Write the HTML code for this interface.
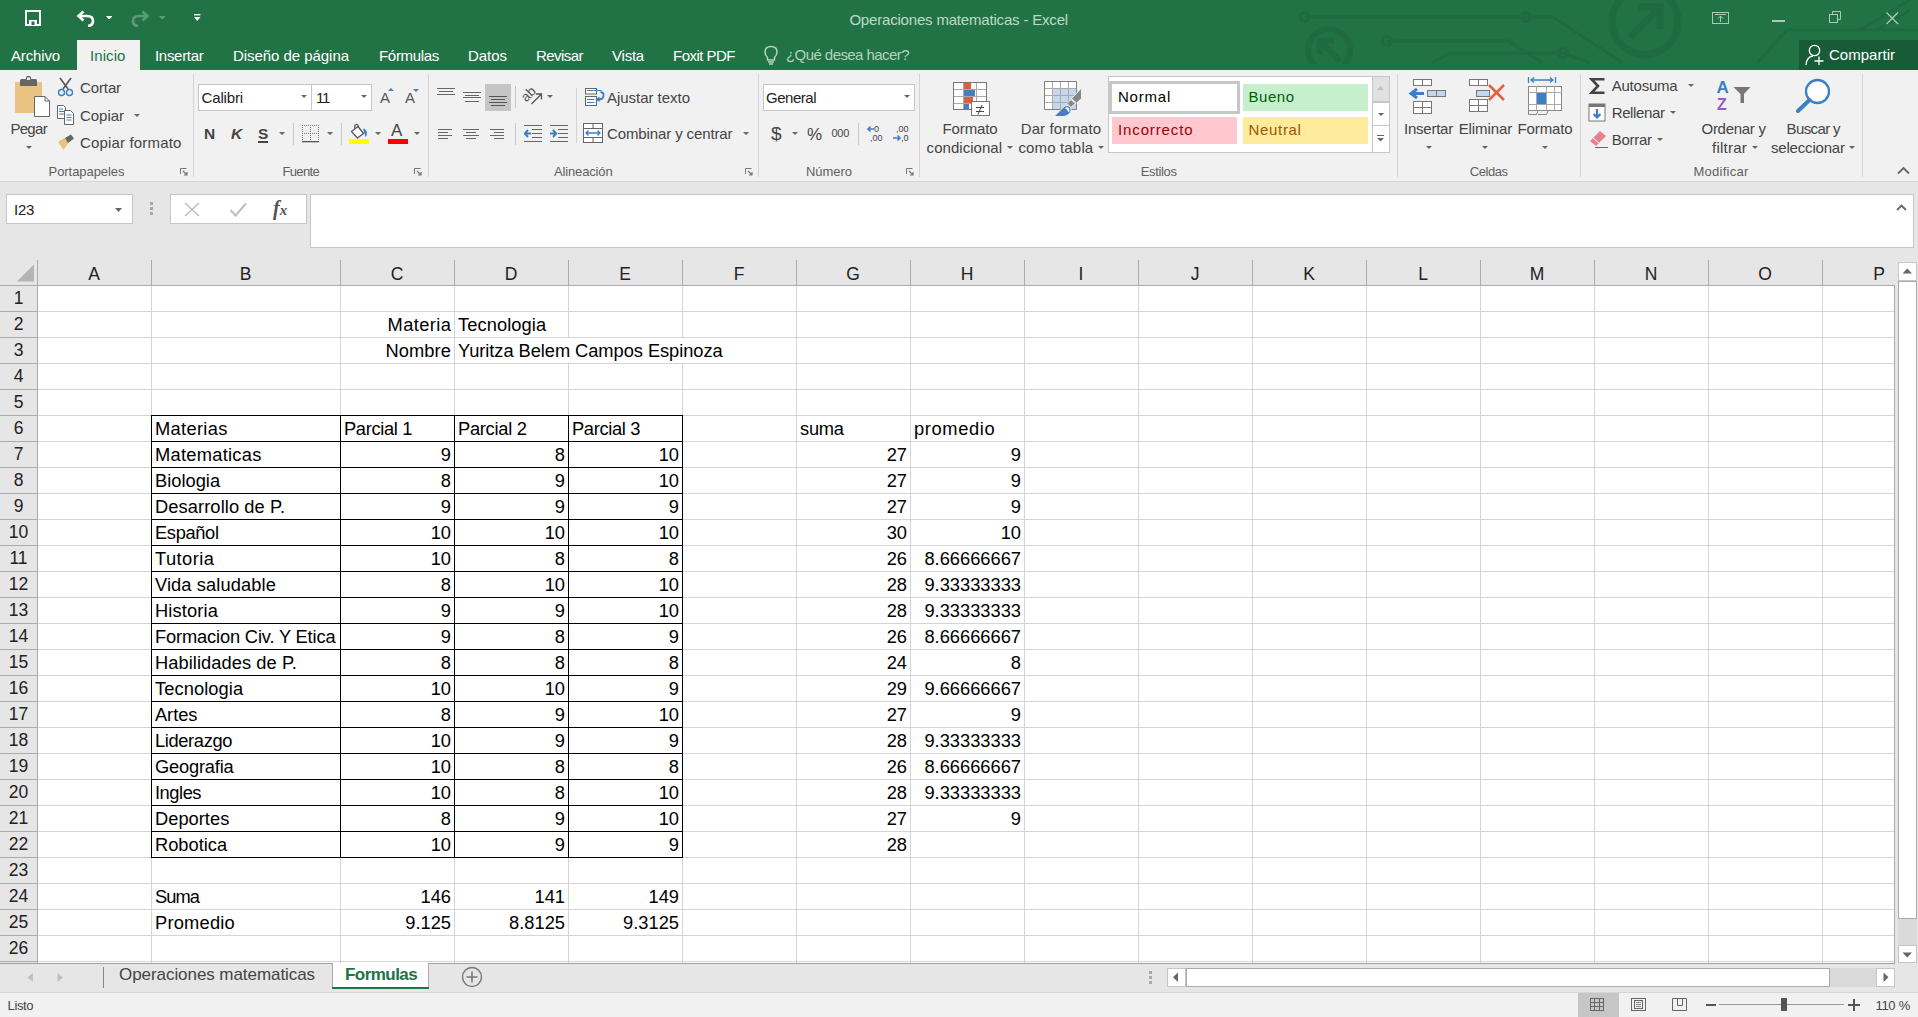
<!DOCTYPE html>
<html><head><meta charset="utf-8">
<style>
*{margin:0;padding:0;box-sizing:border-box}
html,body{width:1918px;height:1017px;overflow:hidden;background:#fff;font-family:"Liberation Sans",sans-serif;position:relative}
.a{position:absolute;white-space:nowrap}
#top{position:absolute;left:0;top:0;width:1918px;height:70px;background:#217346;overflow:hidden}
#ribbon{position:absolute;left:0;top:70px;width:1918px;height:112px;background:#f1f1f1;border-bottom:1px solid #d5d5d5}
#fbar{position:absolute;left:0;top:182px;width:1918px;height:78px;background:#e6e6e6}
#hdr{position:absolute;left:0;top:260px;width:1895px;height:25px;background:#e6e6e6}
#rowhdr{position:absolute;left:0;top:285px;width:37px;height:678px;background:#e6e6e6}
#tabs{position:absolute;left:0;top:963px;width:1918px;height:29px;background:#e6e6e6}
#status{position:absolute;left:0;top:992px;width:1918px;height:25px;background:#f1f1f1;border-top:1px solid #d5d5d5}
#vsb{position:absolute;left:1895px;top:260px;width:23px;height:703px;background:#e6e6e6}
.tab{position:absolute;top:44px;font-size:15px;color:#fff}
.cell{position:absolute;font-size:18.3px;color:#000;height:26px;line-height:27px;white-space:nowrap}
.rh{position:absolute;left:0;width:37px;text-align:center;font-size:17.5px;color:#222;height:26px;line-height:27px}
.ch{position:absolute;top:261px;text-align:center;font-size:17.5px;color:#222;height:25px;line-height:27px}
.vl{position:absolute;top:285px;width:1px;height:678px;background:#d4d4d4}
.hl{position:absolute;left:37px;width:1858px;height:1px;background:#d4d4d4}
.bl{position:absolute;background:#000}
.hv{position:absolute;top:260px;width:1px;height:25px;background:#ababab}
.rhl{position:absolute;left:0;width:37px;height:1px;background:#ababab}
.rl{font-size:15px;color:#262626}
.gl{position:absolute;font-size:13.5px;color:#666}
</style></head><body>
<div id="top"></div>
<div id="ribbon"></div>
<div id="fbar"></div>
<div class="a" style="left:193px;top:74px;width:1px;height:103px;background:#d4d4d4;"></div>
<div class="a" style="left:428px;top:74px;width:1px;height:103px;background:#d4d4d4;"></div>
<div class="a" style="left:758px;top:74px;width:1px;height:103px;background:#d4d4d4;"></div>
<div class="a" style="left:919px;top:74px;width:1px;height:103px;background:#d4d4d4;"></div>
<div class="a" style="left:1397px;top:74px;width:1px;height:103px;background:#d4d4d4;"></div>
<div class="a" style="left:1580px;top:74px;width:1px;height:103px;background:#d4d4d4;"></div>
<div class="a" style="left:1862px;top:74px;width:1px;height:103px;background:#d4d4d4;"></div>
<div class="a" style="left:48.6px;top:164.90px;font-size:13px;line-height:1;color:#5f5f5f;letter-spacing:-0.070px;">Portapapeles</div>
<div class="a" style="left:282.5px;top:164.90px;font-size:13px;line-height:1;color:#5f5f5f;letter-spacing:-0.664px;">Fuente</div>
<div class="a" style="left:554px;top:164.90px;font-size:13px;line-height:1;color:#5f5f5f;letter-spacing:-0.152px;">Alineación</div>
<div class="a" style="left:806px;top:164.90px;font-size:13px;line-height:1;color:#5f5f5f;letter-spacing:-0.042px;">Número</div>
<div class="a" style="left:1140.7px;top:164.90px;font-size:13px;line-height:1;color:#5f5f5f;letter-spacing:-0.328px;">Estilos</div>
<div class="a" style="left:1469.7px;top:164.90px;font-size:13px;line-height:1;color:#5f5f5f;letter-spacing:-0.414px;">Celdas</div>
<div class="a" style="left:1693.5px;top:164.90px;font-size:13px;line-height:1;color:#5f5f5f;letter-spacing:0.250px;">Modificar</div>
<svg class="a" style="left:180px;top:168px;" width="8" height="8" viewBox="0 0 8 8"><path d="M0.5 6V0.5H6.5" fill="none" stroke="#777" stroke-width="1"/><path d="M3 3L7 7M4 7H7V4" fill="none" stroke="#777" stroke-width="1.2"/></svg>
<svg class="a" style="left:414px;top:168px;" width="8" height="8" viewBox="0 0 8 8"><path d="M0.5 6V0.5H6.5" fill="none" stroke="#777" stroke-width="1"/><path d="M3 3L7 7M4 7H7V4" fill="none" stroke="#777" stroke-width="1.2"/></svg>
<svg class="a" style="left:745px;top:168px;" width="8" height="8" viewBox="0 0 8 8"><path d="M0.5 6V0.5H6.5" fill="none" stroke="#777" stroke-width="1"/><path d="M3 3L7 7M4 7H7V4" fill="none" stroke="#777" stroke-width="1.2"/></svg>
<svg class="a" style="left:906px;top:168px;" width="8" height="8" viewBox="0 0 8 8"><path d="M0.5 6V0.5H6.5" fill="none" stroke="#777" stroke-width="1"/><path d="M3 3L7 7M4 7H7V4" fill="none" stroke="#777" stroke-width="1.2"/></svg>
<svg class="a" style="left:14px;top:76px;" width="38" height="42" viewBox="0 0 38 42"><rect x="1" y="6" width="27" height="31" rx="1" fill="#eac282"/>
<path d="M6 10V4.5Q6 3 7.5 3H12V1.5Q12 0 13.5 0H15.5Q17 0 17 1.5V3H21.5Q23 3 23 4.5V10Z" fill="#666"/>
<rect x="13" y="1.5" width="3" height="2.5" fill="#eee"/>
<path d="M20.5 20.5H31L35.5 25V40.5H20.5Z" fill="#fff" stroke="#666" stroke-width="1"/>
<path d="M31 20.5V25H35.5" fill="none" stroke="#666" stroke-width="1"/></svg>
<div class="a" style="left:10.4px;top:120.60px;font-size:15px;line-height:1;color:#444;letter-spacing:-0.686px;">Pegar</div>
<svg class="a" style="left:26px;top:146px;" width="6" height="3" viewBox="0 0 6 3"><path d="M0 0H6L3.0 3Z" fill="#666"/></svg>
<svg class="a" style="left:57px;top:77px;" width="18" height="20" viewBox="0 0 18 20"><path d="M3 1L11 12M14 1L6 12" stroke="#555" stroke-width="1.6" fill="none"/>
<circle cx="4.5" cy="15.5" r="3" fill="none" stroke="#3c7fc4" stroke-width="1.4"/>
<circle cx="12.5" cy="15.5" r="3" fill="none" stroke="#3c7fc4" stroke-width="1.4"/></svg>
<div class="a" style="left:80px;top:79.80px;font-size:15px;line-height:1;color:#444;letter-spacing:-0.115px;">Cortar</div>
<svg class="a" style="left:57px;top:105px;" width="19" height="20" viewBox="0 0 19 20"><path d="M0.5 0.5H6.5L8.5 2.5V13.5H0.5Z" fill="#fff" stroke="#666"/>
<path d="M2 4H6M2 6.5H7M2 9H7" stroke="#3c7fc4"/>
<path d="M7.5 5.5H13.5L16.5 8.5V19.5H7.5Z" fill="#fff" stroke="#666"/>
<path d="M9.5 10H14.5M9.5 12.5H14.5M9.5 15H14.5" stroke="#3c7fc4"/></svg>
<div class="a" style="left:80px;top:107.60px;font-size:15px;line-height:1;color:#444;letter-spacing:-0.031px;">Copiar</div>
<svg class="a" style="left:134px;top:113.5px;" width="6" height="3" viewBox="0 0 6 3"><path d="M0 0H6L3.0 3Z" fill="#666"/></svg>
<svg class="a" style="left:57px;top:134px;" width="19" height="17" viewBox="0 0 19 17"><path d="M1 8L8 3.5L11.5 9L6.5 16Z" fill="#eac282"/>
<path d="M8 4L14 0.5L17 4.5L11 9Z" fill="#666"/></svg>
<div class="a" style="left:80px;top:135.20px;font-size:15px;line-height:1;color:#444;letter-spacing:0.162px;">Copiar formato</div>
<div class="a" style="left:198px;top:84px;width:114px;height:27px;background:#fff;border:1px solid #c6c6c6;"></div>
<div class="a" style="left:311px;top:84px;width:61px;height:27px;background:#fff;border:1px solid #c6c6c6;"></div>
<div class="a" style="left:201.5px;top:89.60px;font-size:15px;line-height:1;color:#222;letter-spacing:-0.143px;">Calibri</div>
<svg class="a" style="left:301px;top:95px;" width="6" height="3" viewBox="0 0 6 3"><path d="M0 0H6L3.0 3Z" fill="#666"/></svg>
<div class="a" style="left:316px;top:89.60px;font-size:15px;line-height:1;color:#222;letter-spacing:-1.289px;">11</div>
<svg class="a" style="left:361px;top:95px;" width="6" height="3" viewBox="0 0 6 3"><path d="M0 0H6L3.0 3Z" fill="#666"/></svg>
<div class="a" style="left:380px;top:89.60px;font-size:15px;line-height:1;color:#555;">A</div>
<svg class="a" style="left:388px;top:88px;" width="7" height="3" viewBox="0 0 7 3"><path d="M0 3H6L3 0Z" fill="#3c7fc4"/></svg>
<div class="a" style="left:405px;top:89.60px;font-size:15px;line-height:1;color:#555;">A</div>
<svg class="a" style="left:413px;top:89px;" width="7" height="3" viewBox="0 0 7 3"><path d="M0 0H6L3 3Z" fill="#3c7fc4"/></svg>
<div class="a" style="left:204px;top:125.58px;font-size:15.5px;line-height:1;color:#444;font-weight:bold;">N</div>
<div class="a" style="left:231px;top:125.58px;font-size:15.5px;line-height:1;color:#444;font-weight:bold;font-style:italic;">K</div>
<div class="a" style="left:258px;top:125.58px;font-size:15.5px;line-height:1;color:#444;font-weight:bold;">S</div>
<div class="a" style="left:258px;top:141px;width:10px;height:2px;background:#444;"></div>
<svg class="a" style="left:279px;top:132px;" width="6" height="3" viewBox="0 0 6 3"><path d="M0 0H6L3.0 3Z" fill="#666"/></svg>
<div class="a" style="left:293px;top:123px;width:1px;height:22px;background:#c8c8c8;"></div>
<svg class="a" style="left:301px;top:124px;" width="19" height="19" viewBox="0 0 19 19"><rect x="1" y="1" width="1" height="1" fill="#777"/><rect x="1" y="9" width="1" height="1" fill="#777"/><rect x="1" y="1" width="1" height="1" fill="#777"/><rect x="9" y="1" width="1" height="1" fill="#777"/><rect x="17" y="1" width="1" height="1" fill="#777"/><rect x="3" y="1" width="1" height="1" fill="#777"/><rect x="3" y="9" width="1" height="1" fill="#777"/><rect x="1" y="3" width="1" height="1" fill="#777"/><rect x="9" y="3" width="1" height="1" fill="#777"/><rect x="17" y="3" width="1" height="1" fill="#777"/><rect x="5" y="1" width="1" height="1" fill="#777"/><rect x="5" y="9" width="1" height="1" fill="#777"/><rect x="1" y="5" width="1" height="1" fill="#777"/><rect x="9" y="5" width="1" height="1" fill="#777"/><rect x="17" y="5" width="1" height="1" fill="#777"/><rect x="7" y="1" width="1" height="1" fill="#777"/><rect x="7" y="9" width="1" height="1" fill="#777"/><rect x="1" y="7" width="1" height="1" fill="#777"/><rect x="9" y="7" width="1" height="1" fill="#777"/><rect x="17" y="7" width="1" height="1" fill="#777"/><rect x="9" y="1" width="1" height="1" fill="#777"/><rect x="9" y="9" width="1" height="1" fill="#777"/><rect x="1" y="9" width="1" height="1" fill="#777"/><rect x="9" y="9" width="1" height="1" fill="#777"/><rect x="17" y="9" width="1" height="1" fill="#777"/><rect x="11" y="1" width="1" height="1" fill="#777"/><rect x="11" y="9" width="1" height="1" fill="#777"/><rect x="1" y="11" width="1" height="1" fill="#777"/><rect x="9" y="11" width="1" height="1" fill="#777"/><rect x="17" y="11" width="1" height="1" fill="#777"/><rect x="13" y="1" width="1" height="1" fill="#777"/><rect x="13" y="9" width="1" height="1" fill="#777"/><rect x="1" y="13" width="1" height="1" fill="#777"/><rect x="9" y="13" width="1" height="1" fill="#777"/><rect x="17" y="13" width="1" height="1" fill="#777"/><rect x="15" y="1" width="1" height="1" fill="#777"/><rect x="15" y="9" width="1" height="1" fill="#777"/><rect x="1" y="15" width="1" height="1" fill="#777"/><rect x="9" y="15" width="1" height="1" fill="#777"/><rect x="17" y="15" width="1" height="1" fill="#777"/><rect x="17" y="1" width="1" height="1" fill="#777"/><rect x="17" y="9" width="1" height="1" fill="#777"/><rect x="1" y="17" width="1" height="1" fill="#777"/><rect x="9" y="17" width="1" height="1" fill="#777"/><rect x="17" y="17" width="1" height="1" fill="#777"/><rect x="1" y="17" width="17" height="1.3" fill="#555"/></svg>
<svg class="a" style="left:327px;top:132px;" width="6" height="3" viewBox="0 0 6 3"><path d="M0 0H6L3.0 3Z" fill="#666"/></svg>
<div class="a" style="left:341px;top:123px;width:1px;height:22px;background:#c8c8c8;"></div>
<svg class="a" style="left:348px;top:123px;" width="22" height="22" viewBox="0 0 22 22"><path d="M3.5 8.5L10 3.5L15.5 10.5L9.5 15Z" fill="#fff" stroke="#555" stroke-width="1.3" stroke-linejoin="round"/>
<path d="M7 6Q6 2.5 8 1.5Q10 1 10.5 4" fill="none" stroke="#555" stroke-width="1.2"/>
<path d="M15 5.5Q18.5 6 19 10Q19 12.5 17.5 14L16.5 10.5Z" fill="#3c7fc4"/>
<rect x="1" y="16" width="20" height="5" fill="#ffff00"/></svg>
<svg class="a" style="left:375px;top:132px;" width="6" height="3" viewBox="0 0 6 3"><path d="M0 0H6L3.0 3Z" fill="#666"/></svg>
<div class="a" style="left:391px;top:122.41px;font-size:17px;line-height:1;color:#444;">A</div>
<div class="a" style="left:388px;top:139px;width:20px;height:5px;background:#ff0000;"></div>
<svg class="a" style="left:414px;top:132px;" width="6" height="3" viewBox="0 0 6 3"><path d="M0 0H6L3.0 3Z" fill="#666"/></svg>
<svg class="a" style="left:437px;top:85px;" width="20" height="12" viewBox="0 0 20 12"><path d="M0 3.5H18" stroke="#666" stroke-width="1"/><path d="M2 6.5H16" stroke="#666" stroke-width="1"/><path d="M0 9.5H18" stroke="#666" stroke-width="1"/></svg>
<svg class="a" style="left:463px;top:88px;" width="20" height="16" viewBox="0 0 20 16"><path d="M0 4.5H18" stroke="#666" stroke-width="1"/><path d="M2 7.5H16" stroke="#666" stroke-width="1"/><path d="M0 9.5H18" stroke="#666" stroke-width="1"/><path d="M2 13.5H16" stroke="#666" stroke-width="1"/></svg>
<div class="a" style="left:485px;top:84px;width:26px;height:27px;background:#c5c5c5;"></div>
<svg class="a" style="left:489px;top:95px;" width="20" height="14" viewBox="0 0 20 14"><path d="M0 1.5H18" stroke="#555" stroke-width="1"/><path d="M2 4.5H16" stroke="#555" stroke-width="1"/><path d="M0 7.5H18" stroke="#555" stroke-width="1"/><path d="M2 10.5H16" stroke="#555" stroke-width="1"/></svg>
<div class="a" style="left:515px;top:86px;width:1px;height:22px;background:#c8c8c8;"></div>
<svg class="a" style="left:520px;top:85px;" width="24" height="22" viewBox="0 0 24 22"><text x="1" y="13" font-family="Liberation Sans" font-size="13.5" fill="#555" transform="rotate(-45 9 9)">ab</text>
<path d="M11.5 19L21 9.5M16 9H21.5V14.5" stroke="#555" stroke-width="1.3" fill="none"/></svg>
<svg class="a" style="left:547px;top:95px;" width="6" height="3" viewBox="0 0 6 3"><path d="M0 0H6L3.0 3Z" fill="#666"/></svg>
<div class="a" style="left:576px;top:88px;width:1px;height:55px;background:#d4d4d4;"></div>
<svg class="a" style="left:584px;top:87px;" width="22" height="20" viewBox="0 0 22 20"><rect x="1.5" y="1.5" width="11" height="5.5" fill="#fff" stroke="#666"/>
<rect x="1.5" y="9.5" width="11" height="9" fill="#fff" stroke="#666"/>
<path d="M3 3.5H17.5M3 12.5H10.5M3 15.5H10.5" stroke="#3c7fc4" stroke-width="1.1"/>
<path d="M16.5 5Q20 5.5 19.5 9Q19 12.5 14.5 12.5" stroke="#3c7fc4" stroke-width="1.8" fill="none"/>
<path d="M15.5 9.5L11.5 12.5L15.5 15Z" fill="#3c7fc4"/></svg>
<div class="a" style="left:607px;top:89.60px;font-size:15px;line-height:1;color:#444;letter-spacing:-0.030px;">Ajustar texto</div>
<svg class="a" style="left:438px;top:128px;" width="18" height="12" viewBox="0 0 18 12"><path d="M0 1.5H14" stroke="#666" stroke-width="1"/><path d="M0 4.5H10" stroke="#666" stroke-width="1"/><path d="M0 7.5H14" stroke="#666" stroke-width="1"/><path d="M0 10.5H10" stroke="#666" stroke-width="1"/></svg>
<svg class="a" style="left:463px;top:128px;" width="18" height="12" viewBox="0 0 18 12"><path d="M0 1.5H16" stroke="#666" stroke-width="1"/><path d="M3 4.5H13" stroke="#666" stroke-width="1"/><path d="M0 7.5H16" stroke="#666" stroke-width="1"/><path d="M3 10.5H13" stroke="#666" stroke-width="1"/></svg>
<svg class="a" style="left:490px;top:128px;" width="18" height="12" viewBox="0 0 18 12"><path d="M0 1.5H14" stroke="#666" stroke-width="1"/><path d="M4 4.5H14" stroke="#666" stroke-width="1"/><path d="M0 7.5H14" stroke="#666" stroke-width="1"/><path d="M4 10.5H14" stroke="#666" stroke-width="1"/></svg>
<div class="a" style="left:515px;top:123px;width:1px;height:22px;background:#c8c8c8;"></div>
<svg class="a" style="left:524px;top:125px;" width="19" height="18" viewBox="0 0 19 18"><path d="M0 0.5H18M8 4.5H18M8 8.5H18M8 12.5H18M0 16.5H18" stroke="#666"/>
<path d="M7 8.5H1M4 5L0.8 8.5L4 12" stroke="#3c7fc4" stroke-width="2" fill="none"/></svg>
<svg class="a" style="left:550px;top:125px;" width="19" height="18" viewBox="0 0 19 18"><path d="M0 0.5H18M8 4.5H18M8 8.5H18M8 12.5H18M0 16.5H18" stroke="#666"/>
<path d="M0 8.5H6M3 5L6.2 8.5L3 12" stroke="#3c7fc4" stroke-width="2" fill="none"/></svg>
<svg class="a" style="left:583px;top:123px;" width="21" height="21" viewBox="0 0 21 21"><rect x="0.5" y="0.5" width="19" height="19" fill="#fff" stroke="#666"/>
<path d="M0.5 5.5H19.5M0.5 14.5H19.5M10 0.5V5.5M10 14.5V19.5" stroke="#666"/>
<path d="M3 10H17M5.5 7.5L3 10L5.5 12.5M14.5 7.5L17 10L14.5 12.5" stroke="#3c7fc4" stroke-width="1.3" fill="none"/></svg>
<div class="a" style="left:607px;top:125.60px;font-size:15px;line-height:1;color:#444;letter-spacing:-0.115px;">Combinar y centrar</div>
<svg class="a" style="left:743px;top:132px;" width="6" height="3" viewBox="0 0 6 3"><path d="M0 0H6L3.0 3Z" fill="#666"/></svg>
<div class="a" style="left:763px;top:84px;width:152px;height:27px;background:#fff;border:1px solid #c6c6c6;"></div>
<div class="a" style="left:766px;top:89.60px;font-size:15px;line-height:1;color:#222;letter-spacing:-0.482px;">General</div>
<svg class="a" style="left:904px;top:95px;" width="6" height="3" viewBox="0 0 6 3"><path d="M0 0H6L3.0 3Z" fill="#666"/></svg>
<div class="a" style="left:771px;top:124.22px;font-size:19px;line-height:1;color:#444;">$</div>
<svg class="a" style="left:792px;top:132px;" width="6" height="3" viewBox="0 0 6 3"><path d="M0 0H6L3.0 3Z" fill="#666"/></svg>
<div class="a" style="left:807px;top:125.91px;font-size:17px;line-height:1;color:#444;">%</div>
<div class="a" style="left:831.5px;top:127.99px;font-size:11px;line-height:1;color:#444;letter-spacing:-0.292px;">000</div>
<div class="a" style="left:858px;top:123px;width:1px;height:22px;background:#c8c8c8;"></div>
<svg class="a" style="left:866px;top:124px;" width="20" height="20" viewBox="0 0 20 20"><text x="8" y="8" font-family="Liberation Sans" font-size="9" fill="#444">0</text>
<text x="4" y="17" font-family="Liberation Sans" font-size="9" fill="#444">,00</text>
<path d="M8 5H2M4.5 2.5L2 5L4.5 7.5" stroke="#3c7fc4" stroke-width="1.6" fill="none"/></svg>
<svg class="a" style="left:892px;top:124px;" width="20" height="20" viewBox="0 0 20 20"><text x="4" y="8" font-family="Liberation Sans" font-size="9" fill="#444">,00</text>
<text x="9" y="17" font-family="Liberation Sans" font-size="9" fill="#444">,0</text>
<path d="M1 14H8M5.5 11.5L8 14L5.5 16.5" stroke="#3c7fc4" stroke-width="1.6" fill="none"/></svg>
<svg class="a" style="left:952px;top:81px;" width="40" height="36" viewBox="0 0 40 36"><rect x="1.5" y="1.5" width="33" height="27" fill="#fff"/>
<rect x="12" y="2" width="7" height="6" fill="#dd5e3b"/>
<rect x="12" y="9" width="11" height="6" fill="#4a7fbf"/>
<rect x="12" y="16" width="9" height="6" fill="#dd5e3b"/>
<rect x="12" y="23" width="5" height="5" fill="#4a7fbf"/>
<path d="M1.5 8.5H34.5M1.5 15.5H34.5M1.5 22.5H34.5M11.5 1.5V28.5M24.5 1.5V28.5" stroke="#aaa" fill="none"/>
<rect x="1.5" y="1.5" width="33" height="27" fill="none" stroke="#777"/>
<rect x="19.5" y="20.5" width="18" height="14" fill="#fff" stroke="#777"/>
<path d="M24 26.5H32M24 30.5H32M30 24L26 33.5" stroke="#444" stroke-width="1" fill="none"/></svg>
<div class="a" style="left:942.5px;top:120.60px;font-size:15px;line-height:1;color:#444;letter-spacing:-0.123px;">Formato</div>
<div class="a" style="left:926.6px;top:140.30px;font-size:15px;line-height:1;color:#444;letter-spacing:0.041px;">condicional</div>
<svg class="a" style="left:1007px;top:146px;" width="6" height="3" viewBox="0 0 6 3"><path d="M0 0H6L3.0 3Z" fill="#666"/></svg>
<svg class="a" style="left:1043px;top:80px;" width="40" height="37" viewBox="0 0 40 37"><rect x="1.5" y="1.5" width="32" height="28" fill="#fff"/>
<rect x="9.5" y="8.5" width="24" height="21" fill="#c5d7ec"/>
<path d="M1.5 8.5H33.5M1.5 15.5H33.5M1.5 22.5H33.5M9.5 1.5V29.5M17.5 1.5V29.5M25.5 1.5V29.5" stroke="#aaa" fill="none"/>
<path d="M1.5 1.5H33.5V29.5H1.5Z" stroke="#808080" fill="none"/>
<path d="M38.5 8V18.5L33.5 23L28.5 18.5Z" fill="#868686" stroke="#f1f1f1" stroke-width="1"/>
<path d="M28 19.5L32 23.5L28 27.5L24 23.5Z" fill="#868686" stroke="#f1f1f1" stroke-width="1"/>
<path d="M11 36.5L20 27.5Q22.5 25 25 25.5Q28.5 26.5 28 30.5Q27 35 21 36.5Z" fill="#4a7fbf" stroke="#f1f1f1" stroke-width="1"/>
<path d="M22 28Q24.5 26.5 26 28.5Q27 31 25.5 32.5Q25 29.5 22 28Z" fill="#fff"/></svg>
<div class="a" style="left:1020.7px;top:120.60px;font-size:15px;line-height:1;color:#444;letter-spacing:0.126px;">Dar formato</div>
<div class="a" style="left:1018.4px;top:140.30px;font-size:15px;line-height:1;color:#444;letter-spacing:0.161px;">como tabla</div>
<svg class="a" style="left:1098px;top:146px;" width="6" height="3" viewBox="0 0 6 3"><path d="M0 0H6L3.0 3Z" fill="#666"/></svg>
<div class="a" style="left:1108px;top:76px;width:282px;height:77px;background:#fff;border:1px solid #c6c6c6;"></div>
<div class="a" style="left:1109px;top:81px;width:131px;height:33px;background:#fff;border:3px solid #c6c6c6;"></div>
<div class="a" style="left:1118px;top:89.40px;font-size:15px;line-height:1;color:#000;letter-spacing:0.776px;">Normal</div>
<div class="a" style="left:1243px;top:84px;width:125px;height:27px;background:#c6efce;"></div>
<div class="a" style="left:1248.6px;top:89.40px;font-size:15px;line-height:1;color:#006100;letter-spacing:0.525px;">Bueno</div>
<div class="a" style="left:1112px;top:117px;width:125px;height:27px;background:#ffc7ce;"></div>
<div class="a" style="left:1118px;top:122.30px;font-size:15px;line-height:1;color:#9c0006;letter-spacing:0.878px;">Incorrecto</div>
<div class="a" style="left:1243px;top:117px;width:125px;height:27px;background:#ffeb9c;"></div>
<div class="a" style="left:1248.6px;top:122.30px;font-size:15px;line-height:1;color:#9c5700;letter-spacing:0.663px;">Neutral</div>
<div class="a" style="left:1372px;top:76px;width:18px;height:26px;background:#e1e1e1;border:1px solid #c6c6c6;"></div>
<div class="a" style="left:1372px;top:102px;width:18px;height:24px;background:#fff;border:1px solid #c6c6c6;"></div>
<div class="a" style="left:1372px;top:125px;width:18px;height:28px;background:#fff;border:1px solid #c6c6c6;"></div>
<svg class="a" style="left:1377px;top:86px;" width="8" height="5" viewBox="0 0 8 5"><path d="M0 4H7L3.5 0Z" fill="#c0c0c0"/></svg>
<svg class="a" style="left:1378px;top:113px;" width="6" height="3" viewBox="0 0 6 3"><path d="M0 0H6L3.0 3Z" fill="#666"/></svg>
<svg class="a" style="left:1377px;top:135px;" width="8" height="8" viewBox="0 0 8 8"><path d="M0 0.5H7" stroke="#666"/><path d="M0 3H7L3.5 6.5Z" fill="#666"/></svg>
<svg class="a" style="left:1408px;top:78px;" width="40" height="37" viewBox="0 0 40 37"><rect x="5.5" y="1.5" width="18" height="6" fill="#fff" stroke="#777"/><path d="M14.5 1.5V7.5" stroke="#777"/>
<rect x="19.5" y="12.5" width="18" height="6" fill="#c5d7ec" stroke="#777"/><path d="M28.5 12.5V18.5" stroke="#777"/>
<path d="M16 15.5H5M9 11L3 15.5L9 20" stroke="#3c7fc4" stroke-width="3" fill="none"/>
<rect x="5.5" y="23.5" width="18" height="12" fill="#fff" stroke="#777"/><path d="M14.5 23.5V35.5M5.5 29.5H23.5" stroke="#777"/></svg>
<div class="a" style="left:1404px;top:120.60px;font-size:15px;line-height:1;color:#444;letter-spacing:-0.234px;">Insertar</div>
<svg class="a" style="left:1426px;top:146px;" width="6" height="3" viewBox="0 0 6 3"><path d="M0 0H6L3.0 3Z" fill="#666"/></svg>
<svg class="a" style="left:1468px;top:78px;" width="40" height="37" viewBox="0 0 40 37"><rect x="1.5" y="1.5" width="18" height="6" fill="#fff" stroke="#777"/><path d="M10.5 1.5V7.5" stroke="#777"/>
<rect x="8.5" y="12.5" width="13" height="6" fill="#c5d7ec" stroke="#777"/>
<rect x="1.5" y="21.5" width="18" height="12" fill="#fff" stroke="#777"/><path d="M10.5 21.5V33.5M1.5 27.5H19.5" stroke="#777"/>
<path d="M21 7L36 22M36 7L21 22" stroke="#e0623a" stroke-width="2.5" fill="none"/></svg>
<div class="a" style="left:1458.7px;top:120.60px;font-size:15px;line-height:1;color:#444;letter-spacing:-0.084px;">Eliminar</div>
<svg class="a" style="left:1482px;top:146px;" width="6" height="3" viewBox="0 0 6 3"><path d="M0 0H6L3.0 3Z" fill="#666"/></svg>
<svg class="a" style="left:1527px;top:77px;" width="38" height="39" viewBox="0 0 38 39"><path d="M1.5 0V6M28.5 0V6M4 3H26M7 0.5L4 3L7 5.5M23 0.5L26 3L23 5.5" stroke="#3c7fc4" stroke-width="1.3" fill="none"/>
<rect x="1.5" y="9.5" width="33" height="24" fill="#fff" stroke="#888"/>
<path d="M1.5 15.5H34.5M1.5 27.5H34.5M9.5 9.5V33.5M19.5 9.5V33.5M27.5 9.5V33.5" stroke="#aaa" fill="none"/>
<rect x="10" y="16" width="9" height="11" fill="#3c7fc4"/>
<path d="M1.5 33.5V37.5H9.5L11 33.5M11 37.5H19.5L21 33.5" stroke="#888" fill="none"/></svg>
<div class="a" style="left:1517.5px;top:120.60px;font-size:15px;line-height:1;color:#444;letter-spacing:-0.123px;">Formato</div>
<svg class="a" style="left:1542px;top:146px;" width="6" height="3" viewBox="0 0 6 3"><path d="M0 0H6L3.0 3Z" fill="#666"/></svg>
<svg class="a" style="left:1589px;top:77px;" width="18" height="18" viewBox="0 0 18 18"><path d="M15.5 2.2H2.5L9 9L2.5 15.8H15.5" fill="none" stroke="#444" stroke-width="2.6" stroke-linejoin="miter"/></svg>
<div class="a" style="left:1611.7px;top:78.10px;font-size:15px;line-height:1;color:#444;letter-spacing:-0.218px;">Autosuma</div>
<svg class="a" style="left:1688px;top:84px;" width="6" height="3" viewBox="0 0 6 3"><path d="M0 0H6L3.0 3Z" fill="#666"/></svg>
<svg class="a" style="left:1588px;top:103px;" width="19" height="20" viewBox="0 0 19 20"><rect x="1" y="1" width="16" height="17" fill="#fff" stroke="#777"/>
<rect x="1" y="1" width="16" height="3" fill="#777"/>
<path d="M9 6V14M5.5 11L9 14.5L12.5 11" stroke="#3c7fc4" stroke-width="2.2" fill="none"/></svg>
<div class="a" style="left:1611.7px;top:105.20px;font-size:15px;line-height:1;color:#444;letter-spacing:-0.382px;">Rellenar</div>
<svg class="a" style="left:1670px;top:111px;" width="6" height="3" viewBox="0 0 6 3"><path d="M0 0H6L3.0 3Z" fill="#666"/></svg>
<svg class="a" style="left:1589px;top:130px;" width="21" height="19" viewBox="0 0 21 19"><path d="M1 11L11 1L17 6L7 16Z" fill="#e8808f"/>
<path d="M4 8L10 13" stroke="#fff" stroke-width="1"/>
<path d="M6 17.5H19" stroke="#666" stroke-width="1"/></svg>
<div class="a" style="left:1611.7px;top:131.80px;font-size:15px;line-height:1;color:#444;letter-spacing:-0.281px;">Borrar</div>
<svg class="a" style="left:1657px;top:138px;" width="6" height="3" viewBox="0 0 6 3"><path d="M0 0H6L3.0 3Z" fill="#666"/></svg>
<div class="a" style="left:1716.5px;top:79.11px;font-size:17px;line-height:1;color:#3c7fc4;font-weight:bold;">A</div>
<div class="a" style="left:1717px;top:96.96px;font-size:16px;line-height:1;color:#9b59c6;font-weight:bold;">Z</div>
<svg class="a" style="left:1733px;top:86px;" width="19" height="19" viewBox="0 0 19 19"><path d="M0.5 1H17.5L11 8V17H7.5V8Z" fill="#777"/></svg>
<div class="a" style="left:1701.5px;top:120.60px;font-size:15px;line-height:1;color:#444;letter-spacing:-0.280px;">Ordenar y</div>
<div class="a" style="left:1712px;top:140.30px;font-size:15px;line-height:1;color:#444;letter-spacing:0.237px;">filtrar</div>
<svg class="a" style="left:1752px;top:146px;" width="6" height="3" viewBox="0 0 6 3"><path d="M0 0H6L3.0 3Z" fill="#666"/></svg>
<svg class="a" style="left:1794px;top:77px;" width="40" height="38" viewBox="0 0 40 38"><circle cx="23.5" cy="14.5" r="11.5" fill="#fff" stroke="#3c7fc4" stroke-width="2.3"/>
<path d="M15.5 23L4 34" stroke="#3c7fc4" stroke-width="4" stroke-linecap="round"/></svg>
<div class="a" style="left:1786.6px;top:120.60px;font-size:15px;line-height:1;color:#444;letter-spacing:-0.620px;">Buscar y</div>
<div class="a" style="left:1771px;top:140.30px;font-size:15px;line-height:1;color:#444;letter-spacing:-0.189px;">seleccionar</div>
<svg class="a" style="left:1849px;top:146px;" width="6" height="3" viewBox="0 0 6 3"><path d="M0 0H6L3.0 3Z" fill="#666"/></svg>
<svg class="a" style="left:1897px;top:166px;" width="13" height="9" viewBox="0 0 13 9"><path d="M1 7.5L6.5 2L12 7.5" stroke="#666" stroke-width="1.8" fill="none"/></svg>
<svg class="a" style="left:1280px;top:0px" width="638" height="64" viewBox="0 0 638 64">
<g stroke="#1f6a40" stroke-width="3" fill="none">
<path d="M25 17H246H273L343 63"/>
<circle cx="25" cy="17" r="4.5"/><circle cx="246" cy="17" r="4.5"/>
<path d="M107 41H228L263 63"/>
<circle cx="107" cy="41" r="4.5"/>
<path d="M152 63L170 53H283L310 63"/>
<circle cx="283" cy="53" r="4.5"/>
<circle cx="365" cy="21.7" r="33" stroke-width="7"/>
<path d="M350 37L380 7M358 7H380V29" stroke-width="7"/>
<circle cx="49" cy="50" r="21" stroke-width="6"/>
<path d="M60 61L40 41M40 55V41H54" stroke-width="6"/>
<path d="M477 63L507 30H638M580 30L633 -2M597 30L630 10"/>
</g></svg>
<div class="a" style="left:849.4px;top:11.60px;font-size:15px;line-height:1;color:#bfd9c6;letter-spacing:-0.184px;">Operaciones matematicas - Excel</div>
<svg class="a" style="left:24px;top:9px;" width="18" height="18" viewBox="0 0 18 18"><rect x="2" y="2" width="14" height="14" fill="none" stroke="#fff" stroke-width="2"/>
<rect x="5" y="11" width="8" height="6" fill="#fff"/><rect x="7.5" y="12.5" width="3" height="3.5" fill="#217346"/></svg>
<svg class="a" style="left:76px;top:10px;" width="21" height="17" viewBox="0 0 21 17"><path d="M3 6H11Q17 6 17 11Q17 15.5 12 16" fill="none" stroke="#fff" stroke-width="2.6"/>
<path d="M7.5 1.5L2.5 6L7.5 10.5" fill="none" stroke="#fff" stroke-width="2.6"/></svg>
<svg class="a" style="left:105.6px;top:15.6px;" width="6.5" height="3.8" viewBox="0 0 6.5 3.8"><path d="M0 0H6.5L3.25 3.8Z" fill="#fff"/></svg>
<svg class="a" style="left:130px;top:10px;" width="21" height="17" viewBox="0 0 21 17"><path d="M17 6H9Q3 6 3 11Q3 15.5 8 16" fill="none" stroke="#5e9b78" stroke-width="2.6"/>
<path d="M12.5 1.5L17.5 6L12.5 10.5" fill="none" stroke="#5e9b78" stroke-width="2.6"/></svg>
<svg class="a" style="left:159px;top:15.6px;" width="6.5" height="3.8" viewBox="0 0 6.5 3.8"><path d="M0 0H6.5L3.25 3.8Z" fill="#5e9b78"/></svg>
<svg class="a" style="left:194px;top:14px;" width="7" height="8" viewBox="0 0 7 8"><path d="M0 0.75H6.5" stroke="#fff" stroke-width="1.3"/><path d="M0 3H6.5L3.25 7Z" fill="#fff"/></svg>
<div class="a" style="left:77px;top:40px;width:63px;height:30px;background:#f1f1f1;"></div>
<div class="a" style="left:11px;top:47.60px;font-size:15px;line-height:1;color:#fff;letter-spacing:-0.145px;">Archivo</div>
<div class="a" style="left:90px;top:47.60px;font-size:15px;line-height:1;color:#217346;letter-spacing:0.081px;">Inicio</div>
<div class="a" style="left:155px;top:47.60px;font-size:15px;line-height:1;color:#fff;letter-spacing:-0.297px;">Insertar</div>
<div class="a" style="left:233px;top:47.60px;font-size:15px;line-height:1;color:#fff;letter-spacing:-0.048px;">Diseño de página</div>
<div class="a" style="left:379px;top:47.60px;font-size:15px;line-height:1;color:#fff;letter-spacing:-0.314px;">Fórmulas</div>
<div class="a" style="left:468px;top:47.60px;font-size:15px;line-height:1;color:#fff;letter-spacing:-0.037px;">Datos</div>
<div class="a" style="left:536px;top:47.60px;font-size:15px;line-height:1;color:#fff;letter-spacing:-0.549px;">Revisar</div>
<div class="a" style="left:612px;top:47.60px;font-size:15px;line-height:1;color:#fff;letter-spacing:-0.216px;">Vista</div>
<div class="a" style="left:673px;top:47.60px;font-size:15px;line-height:1;color:#fff;letter-spacing:-0.517px;">Foxit PDF</div>
<svg class="a" style="left:764px;top:45px;" width="15" height="20" viewBox="0 0 15 20"><path d="M3.5 12.5Q1 10 1 7Q1 1.5 7 1.5Q13 1.5 13 7Q13 10 10.5 12.5V15H3.5Z" fill="none" stroke="#b3d2bc" stroke-width="1.5"/>
<path d="M4 17H10M5 19H9" stroke="#b3d2bc" stroke-width="1.3"/></svg>
<div class="a" style="left:786px;top:46.60px;font-size:15px;line-height:1;color:#b3d2bc;letter-spacing:-0.565px;">¿Qué desea hacer?</div>
<svg class="a" style="left:1712px;top:12px;" width="18" height="13" viewBox="0 0 18 13"><rect x="0.5" y="0.5" width="16" height="11" fill="none" stroke="#a9cbb5"/><path d="M8.5 10V4M6 6.5L8.5 4L11 6.5M3 2.5H14" stroke="#a9cbb5" fill="none"/></svg>
<div class="a" style="left:1772px;top:20px;width:13px;height:1.5px;background:#a9cbb5;"></div>
<svg class="a" style="left:1829px;top:11px;" width="13" height="13" viewBox="0 0 13 13"><rect x="0.5" y="3.5" width="8" height="8" fill="none" stroke="#a9cbb5"/><path d="M3.5 3.5V0.5H11.5V8.5H8.5" fill="none" stroke="#a9cbb5"/></svg>
<svg class="a" style="left:1886px;top:12px;" width="13" height="13" viewBox="0 0 13 13"><path d="M0.5 0.5L12 12M12 0.5L0.5 12" stroke="#a9cbb5" stroke-width="1.3"/></svg>
<div class="a" style="left:1799px;top:40px;width:119px;height:30px;background:#185c37;"></div>
<svg class="a" style="left:1805px;top:44px;" width="20" height="23" viewBox="0 0 20 23"><circle cx="9.5" cy="6.5" r="5.2" fill="none" stroke="#fff" stroke-width="1.3"/>
<path d="M1 21Q1.5 13 8 12" fill="none" stroke="#fff" stroke-width="1.3"/>
<path d="M14 12.5V21M9.5 17H18.5" stroke="#fff" stroke-width="1.3"/></svg>
<div class="a" style="left:1829px;top:46.60px;font-size:15px;line-height:1;color:#fff;letter-spacing:0.016px;">Compartir</div>
<div class="a" style="left:6px;top:194px;width:127px;height:30px;background:#fff;border:1px solid #c6c6c6;"></div>
<div class="a" style="left:14px;top:201.60px;font-size:15px;line-height:1;color:#222;letter-spacing:-0.286px;">I23</div>
<svg class="a" style="left:115px;top:208px;" width="7" height="4" viewBox="0 0 7 4"><path d="M0 0H7L3.5 4Z" fill="#666"/></svg>
<div class="a" style="left:150px;top:202px;width:3px;height:3px;background:#a8a8a8;"></div>
<div class="a" style="left:150px;top:207px;width:3px;height:3px;background:#a8a8a8;"></div>
<div class="a" style="left:150px;top:212px;width:3px;height:3px;background:#a8a8a8;"></div>
<div class="a" style="left:170px;top:194px;width:137px;height:30px;background:#fff;border:1px solid #c6c6c6;"></div>
<svg class="a" style="left:184px;top:202px;" width="17" height="15" viewBox="0 0 17 15"><path d="M1 1L15 14M15 1L1 14" stroke="#c0c0c0" stroke-width="1.6"/></svg>
<svg class="a" style="left:229px;top:202px;" width="19" height="15" viewBox="0 0 19 15"><path d="M1.5 8L6.5 13.5L17 1.5" stroke="#c0c0c0" stroke-width="2.2" fill="none"/></svg>
<div class="a" style="left:273px;top:198.37px;font-size:20px;line-height:1;color:#555;font-weight:bold;font-family:'Liberation Serif',serif;"><i>f</i><i style="font-size:15px">x</i></div>
<div class="a" style="left:310px;top:194px;width:1604px;height:54px;background:#fff;border:1px solid #c6c6c6;"></div>
<svg class="a" style="left:1896px;top:204px;" width="11" height="7" viewBox="0 0 11 7"><path d="M1 6L5.5 1.5L10 6" stroke="#666" stroke-width="1.8" fill="none"/></svg>
<div id="hdr"></div>
<div id="rowhdr"></div>
<div id="vsb"></div>
<div class="vl" style="left:151px"></div>
<div class="vl" style="left:340px"></div>
<div class="vl" style="left:454px"></div>
<div class="vl" style="left:568px"></div>
<div class="vl" style="left:682px"></div>
<div class="vl" style="left:796px"></div>
<div class="vl" style="left:910px"></div>
<div class="vl" style="left:1024px"></div>
<div class="vl" style="left:1138px"></div>
<div class="vl" style="left:1252px"></div>
<div class="vl" style="left:1366px"></div>
<div class="vl" style="left:1480px"></div>
<div class="vl" style="left:1594px"></div>
<div class="vl" style="left:1708px"></div>
<div class="vl" style="left:1822px"></div>
<div class="hl" style="top:311px"></div>
<div class="hl" style="top:337px"></div>
<div class="hl" style="top:363px"></div>
<div class="hl" style="top:389px"></div>
<div class="hl" style="top:415px"></div>
<div class="hl" style="top:441px"></div>
<div class="hl" style="top:467px"></div>
<div class="hl" style="top:493px"></div>
<div class="hl" style="top:519px"></div>
<div class="hl" style="top:545px"></div>
<div class="hl" style="top:571px"></div>
<div class="hl" style="top:597px"></div>
<div class="hl" style="top:623px"></div>
<div class="hl" style="top:649px"></div>
<div class="hl" style="top:675px"></div>
<div class="hl" style="top:701px"></div>
<div class="hl" style="top:727px"></div>
<div class="hl" style="top:753px"></div>
<div class="hl" style="top:779px"></div>
<div class="hl" style="top:805px"></div>
<div class="hl" style="top:831px"></div>
<div class="hl" style="top:857px"></div>
<div class="hl" style="top:883px"></div>
<div class="hl" style="top:909px"></div>
<div class="hl" style="top:935px"></div>
<div class="hl" style="top:961px"></div>
<div class="a" style="left:455px;top:338px;width:341px;height:25px;background:#fff"></div>
<div class="bl" style="left:151px;top:415px;width:532px;height:1px"></div>
<div class="bl" style="left:151px;top:441px;width:532px;height:1px"></div>
<div class="bl" style="left:151px;top:467px;width:532px;height:1px"></div>
<div class="bl" style="left:151px;top:493px;width:532px;height:1px"></div>
<div class="bl" style="left:151px;top:519px;width:532px;height:1px"></div>
<div class="bl" style="left:151px;top:545px;width:532px;height:1px"></div>
<div class="bl" style="left:151px;top:571px;width:532px;height:1px"></div>
<div class="bl" style="left:151px;top:597px;width:532px;height:1px"></div>
<div class="bl" style="left:151px;top:623px;width:532px;height:1px"></div>
<div class="bl" style="left:151px;top:649px;width:532px;height:1px"></div>
<div class="bl" style="left:151px;top:675px;width:532px;height:1px"></div>
<div class="bl" style="left:151px;top:701px;width:532px;height:1px"></div>
<div class="bl" style="left:151px;top:727px;width:532px;height:1px"></div>
<div class="bl" style="left:151px;top:753px;width:532px;height:1px"></div>
<div class="bl" style="left:151px;top:779px;width:532px;height:1px"></div>
<div class="bl" style="left:151px;top:805px;width:532px;height:1px"></div>
<div class="bl" style="left:151px;top:831px;width:532px;height:1px"></div>
<div class="bl" style="left:151px;top:857px;width:532px;height:1px"></div>
<div class="bl" style="left:151px;top:415px;width:1px;height:443px"></div>
<div class="bl" style="left:340px;top:415px;width:1px;height:443px"></div>
<div class="bl" style="left:454px;top:415px;width:1px;height:443px"></div>
<div class="bl" style="left:568px;top:415px;width:1px;height:443px"></div>
<div class="bl" style="left:682px;top:415px;width:1px;height:443px"></div>
<div class="ch" style="left:37px;width:114px">A</div>
<div class="hv" style="left:151px"></div>
<div class="ch" style="left:151px;width:189px">B</div>
<div class="hv" style="left:340px"></div>
<div class="ch" style="left:340px;width:114px">C</div>
<div class="hv" style="left:454px"></div>
<div class="ch" style="left:454px;width:114px">D</div>
<div class="hv" style="left:568px"></div>
<div class="ch" style="left:568px;width:114px">E</div>
<div class="hv" style="left:682px"></div>
<div class="ch" style="left:682px;width:114px">F</div>
<div class="hv" style="left:796px"></div>
<div class="ch" style="left:796px;width:114px">G</div>
<div class="hv" style="left:910px"></div>
<div class="ch" style="left:910px;width:114px">H</div>
<div class="hv" style="left:1024px"></div>
<div class="ch" style="left:1024px;width:114px">I</div>
<div class="hv" style="left:1138px"></div>
<div class="ch" style="left:1138px;width:114px">J</div>
<div class="hv" style="left:1252px"></div>
<div class="ch" style="left:1252px;width:114px">K</div>
<div class="hv" style="left:1366px"></div>
<div class="ch" style="left:1366px;width:114px">L</div>
<div class="hv" style="left:1480px"></div>
<div class="ch" style="left:1480px;width:114px">M</div>
<div class="hv" style="left:1594px"></div>
<div class="ch" style="left:1594px;width:114px">N</div>
<div class="hv" style="left:1708px"></div>
<div class="ch" style="left:1708px;width:114px">O</div>
<div class="hv" style="left:1822px"></div>
<div class="ch" style="left:1822px;width:114px">P</div>
<div class="rh" style="top:285px">1</div>
<div class="rhl" style="top:311px"></div>
<div class="rh" style="top:311px">2</div>
<div class="rhl" style="top:337px"></div>
<div class="rh" style="top:337px">3</div>
<div class="rhl" style="top:363px"></div>
<div class="rh" style="top:363px">4</div>
<div class="rhl" style="top:389px"></div>
<div class="rh" style="top:389px">5</div>
<div class="rhl" style="top:415px"></div>
<div class="rh" style="top:415px">6</div>
<div class="rhl" style="top:441px"></div>
<div class="rh" style="top:441px">7</div>
<div class="rhl" style="top:467px"></div>
<div class="rh" style="top:467px">8</div>
<div class="rhl" style="top:493px"></div>
<div class="rh" style="top:493px">9</div>
<div class="rhl" style="top:519px"></div>
<div class="rh" style="top:519px">10</div>
<div class="rhl" style="top:545px"></div>
<div class="rh" style="top:545px">11</div>
<div class="rhl" style="top:571px"></div>
<div class="rh" style="top:571px">12</div>
<div class="rhl" style="top:597px"></div>
<div class="rh" style="top:597px">13</div>
<div class="rhl" style="top:623px"></div>
<div class="rh" style="top:623px">14</div>
<div class="rhl" style="top:649px"></div>
<div class="rh" style="top:649px">15</div>
<div class="rhl" style="top:675px"></div>
<div class="rh" style="top:675px">16</div>
<div class="rhl" style="top:701px"></div>
<div class="rh" style="top:701px">17</div>
<div class="rhl" style="top:727px"></div>
<div class="rh" style="top:727px">18</div>
<div class="rhl" style="top:753px"></div>
<div class="rh" style="top:753px">19</div>
<div class="rhl" style="top:779px"></div>
<div class="rh" style="top:779px">20</div>
<div class="rhl" style="top:805px"></div>
<div class="rh" style="top:805px">21</div>
<div class="rhl" style="top:831px"></div>
<div class="rh" style="top:831px">22</div>
<div class="rhl" style="top:857px"></div>
<div class="rh" style="top:857px">23</div>
<div class="rhl" style="top:883px"></div>
<div class="rh" style="top:883px">24</div>
<div class="rhl" style="top:909px"></div>
<div class="rh" style="top:909px">25</div>
<div class="rhl" style="top:935px"></div>
<div class="rh" style="top:935px">26</div>
<div class="rhl" style="top:961px"></div>
<div class="cell cr" style="right:1466.58px;top:311px;letter-spacing:0.417px;">Materia</div>
<div class="cell" style="left:458px;top:311px;letter-spacing:0.078px;">Tecnologia</div>
<div class="cell cr" style="right:1466.88px;top:337px;letter-spacing:0.12px;">Nombre</div>
<div class="cell" style="left:458px;top:337px;letter-spacing:-0.054px;">Yuritza Belem Campos Espinoza</div>
<div class="cell" style="left:155px;top:415px;letter-spacing:0.329px;">Materias</div>
<div class="cell" style="left:344px;top:415px;letter-spacing:-0.325px;">Parcial 1</div>
<div class="cell" style="left:458px;top:415px;letter-spacing:-0.275px;">Parcial 2</div>
<div class="cell" style="left:572px;top:415px;letter-spacing:-0.338px;">Parcial 3</div>
<div class="cell" style="left:800px;top:415px;letter-spacing:-0.233px;">suma</div>
<div class="cell" style="left:914px;top:415px;letter-spacing:0.629px;">promedio</div>
<div class="cell" style="left:155px;top:441px;letter-spacing:0.27px;">Matematicas</div>
<div class="cell cr" style="right:1467.00px;top:441px;">9</div>
<div class="cell cr" style="right:1353.00px;top:441px;">8</div>
<div class="cell cr" style="right:1239.00px;top:441px;">10</div>
<div class="cell cr" style="right:1011.00px;top:441px;">27</div>
<div class="cell cr" style="right:897.00px;top:441px;">9</div>
<div class="cell" style="left:155px;top:467px;">Biologia</div>
<div class="cell cr" style="right:1467.00px;top:467px;">8</div>
<div class="cell cr" style="right:1353.00px;top:467px;">9</div>
<div class="cell cr" style="right:1239.00px;top:467px;">10</div>
<div class="cell cr" style="right:1011.00px;top:467px;">27</div>
<div class="cell cr" style="right:897.00px;top:467px;">9</div>
<div class="cell" style="left:155px;top:493px;letter-spacing:0.087px;">Desarrollo de P.</div>
<div class="cell cr" style="right:1467.00px;top:493px;">9</div>
<div class="cell cr" style="right:1353.00px;top:493px;">9</div>
<div class="cell cr" style="right:1239.00px;top:493px;">9</div>
<div class="cell cr" style="right:1011.00px;top:493px;">27</div>
<div class="cell cr" style="right:897.00px;top:493px;">9</div>
<div class="cell" style="left:155px;top:519px;letter-spacing:-0.35px;">Español</div>
<div class="cell cr" style="right:1467.00px;top:519px;">10</div>
<div class="cell cr" style="right:1353.00px;top:519px;">10</div>
<div class="cell cr" style="right:1239.00px;top:519px;">10</div>
<div class="cell cr" style="right:1011.00px;top:519px;">30</div>
<div class="cell cr" style="right:897.00px;top:519px;">10</div>
<div class="cell" style="left:155px;top:545px;letter-spacing:0.433px;">Tutoria</div>
<div class="cell cr" style="right:1467.00px;top:545px;">10</div>
<div class="cell cr" style="right:1353.00px;top:545px;">8</div>
<div class="cell cr" style="right:1239.00px;top:545px;">8</div>
<div class="cell cr" style="right:1011.00px;top:545px;">26</div>
<div class="cell cr" style="right:897.00px;top:545px;">8.66666667</div>
<div class="cell" style="left:155px;top:571px;letter-spacing:0.092px;">Vida saludable</div>
<div class="cell cr" style="right:1467.00px;top:571px;">8</div>
<div class="cell cr" style="right:1353.00px;top:571px;">10</div>
<div class="cell cr" style="right:1239.00px;top:571px;">10</div>
<div class="cell cr" style="right:1011.00px;top:571px;">28</div>
<div class="cell cr" style="right:897.00px;top:571px;">9.33333333</div>
<div class="cell" style="left:155px;top:597px;letter-spacing:0.129px;">Historia</div>
<div class="cell cr" style="right:1467.00px;top:597px;">9</div>
<div class="cell cr" style="right:1353.00px;top:597px;">9</div>
<div class="cell cr" style="right:1239.00px;top:597px;">10</div>
<div class="cell cr" style="right:1011.00px;top:597px;">28</div>
<div class="cell cr" style="right:897.00px;top:597px;">9.33333333</div>
<div class="cell" style="left:155px;top:623px;letter-spacing:-0.157px;">Formacion Civ. Y Etica</div>
<div class="cell cr" style="right:1467.00px;top:623px;">9</div>
<div class="cell cr" style="right:1353.00px;top:623px;">8</div>
<div class="cell cr" style="right:1239.00px;top:623px;">9</div>
<div class="cell cr" style="right:1011.00px;top:623px;">26</div>
<div class="cell cr" style="right:897.00px;top:623px;">8.66666667</div>
<div class="cell" style="left:155px;top:649px;letter-spacing:0.062px;">Habilidades de P.</div>
<div class="cell cr" style="right:1467.00px;top:649px;">8</div>
<div class="cell cr" style="right:1353.00px;top:649px;">8</div>
<div class="cell cr" style="right:1239.00px;top:649px;">8</div>
<div class="cell cr" style="right:1011.00px;top:649px;">24</div>
<div class="cell cr" style="right:897.00px;top:649px;">8</div>
<div class="cell" style="left:155px;top:675px;letter-spacing:0.078px;">Tecnologia</div>
<div class="cell cr" style="right:1467.00px;top:675px;">10</div>
<div class="cell cr" style="right:1353.00px;top:675px;">10</div>
<div class="cell cr" style="right:1239.00px;top:675px;">9</div>
<div class="cell cr" style="right:1011.00px;top:675px;">29</div>
<div class="cell cr" style="right:897.00px;top:675px;">9.66666667</div>
<div class="cell" style="left:155px;top:701px;letter-spacing:-0.075px;">Artes</div>
<div class="cell cr" style="right:1467.00px;top:701px;">8</div>
<div class="cell cr" style="right:1353.00px;top:701px;">9</div>
<div class="cell cr" style="right:1239.00px;top:701px;">10</div>
<div class="cell cr" style="right:1011.00px;top:701px;">27</div>
<div class="cell cr" style="right:897.00px;top:701px;">9</div>
<div class="cell" style="left:155px;top:727px;letter-spacing:-0.363px;">Liderazgo</div>
<div class="cell cr" style="right:1467.00px;top:727px;">10</div>
<div class="cell cr" style="right:1353.00px;top:727px;">9</div>
<div class="cell cr" style="right:1239.00px;top:727px;">9</div>
<div class="cell cr" style="right:1011.00px;top:727px;">28</div>
<div class="cell cr" style="right:897.00px;top:727px;">9.33333333</div>
<div class="cell" style="left:155px;top:753px;letter-spacing:-0.188px;">Geografia</div>
<div class="cell cr" style="right:1467.00px;top:753px;">10</div>
<div class="cell cr" style="right:1353.00px;top:753px;">8</div>
<div class="cell cr" style="right:1239.00px;top:753px;">8</div>
<div class="cell cr" style="right:1011.00px;top:753px;">26</div>
<div class="cell cr" style="right:897.00px;top:753px;">8.66666667</div>
<div class="cell" style="left:155px;top:779px;letter-spacing:-0.46px;">Ingles</div>
<div class="cell cr" style="right:1467.00px;top:779px;">10</div>
<div class="cell cr" style="right:1353.00px;top:779px;">8</div>
<div class="cell cr" style="right:1239.00px;top:779px;">10</div>
<div class="cell cr" style="right:1011.00px;top:779px;">28</div>
<div class="cell cr" style="right:897.00px;top:779px;">9.33333333</div>
<div class="cell" style="left:155px;top:805px;letter-spacing:0.014px;">Deportes</div>
<div class="cell cr" style="right:1467.00px;top:805px;">8</div>
<div class="cell cr" style="right:1353.00px;top:805px;">9</div>
<div class="cell cr" style="right:1239.00px;top:805px;">10</div>
<div class="cell cr" style="right:1011.00px;top:805px;">27</div>
<div class="cell cr" style="right:897.00px;top:805px;">9</div>
<div class="cell" style="left:155px;top:831px;">Robotica</div>
<div class="cell cr" style="right:1467.00px;top:831px;">10</div>
<div class="cell cr" style="right:1353.00px;top:831px;">9</div>
<div class="cell cr" style="right:1239.00px;top:831px;">9</div>
<div class="cell cr" style="right:1011.00px;top:831px;">28</div>
<div class="cell" style="left:155px;top:883px;letter-spacing:-0.967px;">Suma</div>
<div class="cell cr" style="right:1467.00px;top:883px;">146</div>
<div class="cell cr" style="right:1353.00px;top:883px;">141</div>
<div class="cell cr" style="right:1239.00px;top:883px;">149</div>
<div class="cell" style="left:155px;top:909px;letter-spacing:0.214px;">Promedio</div>
<div class="cell cr" style="right:1467.00px;top:909px;">9.125</div>
<div class="cell cr" style="right:1353.00px;top:909px;">8.8125</div>
<div class="cell cr" style="right:1239.00px;top:909px;">9.3125</div>
<div class="a" style="left:0;top:285px;width:1895px;height:1px;background:#ababab"></div>
<div class="a" style="left:37px;top:260px;width:1px;height:703px;background:#ababab"></div>
<div class="a" style="left:1894px;top:285px;width:1px;height:678px;background:#ababab"></div>
<svg class="a" style="left:16px;top:264px" width="19" height="18" viewBox="0 0 19 18"><path d="M18 0.5V17.5H1Z" fill="#b4b4b4"/></svg>
<div id="tabs"></div>
<div id="status"></div>
<div class="a" style="left:0px;top:963px;width:1895px;height:1px;background:#a0a0a0;"></div>
<svg class="a" style="left:27px;top:973px;" width="7" height="10" viewBox="0 0 7 10"><path d="M6 0V9L0.5 4.5Z" fill="#c0c0c0"/></svg>
<svg class="a" style="left:57px;top:973px;" width="7" height="10" viewBox="0 0 7 10"><path d="M0.5 0V9L6 4.5Z" fill="#c0c0c0"/></svg>
<div class="a" style="left:103px;top:967px;width:1px;height:21px;background:#888;"></div>
<div class="a" style="left:119px;top:965.61px;font-size:17px;line-height:1;color:#444;letter-spacing:-0.062px;">Operaciones matematicas</div>
<div class="a" style="left:332px;top:963px;width:97px;height:26px;background:#fff;border-left:1px solid #ababab;border-right:1px solid #ababab;"></div>
<div class="a" style="left:332px;top:987px;width:97px;height:2px;background:#217346;"></div>
<div class="a" style="left:345px;top:965.61px;font-size:17px;line-height:1;color:#217346;letter-spacing:-0.539px;font-weight:bold;">Formulas</div>
<svg class="a" style="left:461px;top:966px;" width="22" height="22" viewBox="0 0 22 22"><circle cx="11" cy="11" r="9.5" fill="none" stroke="#777" stroke-width="1.4"/><path d="M11 5.5V16.5M5.5 11H16.5" stroke="#777" stroke-width="1.6"/></svg>
<div class="a" style="left:1149px;top:971px;width:3px;height:3px;background:#a8a8a8;"></div>
<div class="a" style="left:1149px;top:976px;width:3px;height:3px;background:#a8a8a8;"></div>
<div class="a" style="left:1149px;top:981px;width:3px;height:3px;background:#a8a8a8;"></div>
<div class="a" style="left:1167px;top:968px;width:19px;height:19px;background:#fff;border:1px solid #c6c6c6;"></div>
<svg class="a" style="left:1172px;top:972px;" width="8" height="11" viewBox="0 0 8 11"><path d="M6 0.5V10L1 5.25Z" fill="#666"/></svg>
<div class="a" style="left:1186px;top:968px;width:644px;height:19px;background:#fff;border:1px solid #ababab;"></div>
<div class="a" style="left:1830px;top:968px;width:47px;height:19px;background:#dadada;"></div>
<div class="a" style="left:1876px;top:968px;width:19px;height:19px;background:#fff;border:1px solid #c6c6c6;"></div>
<svg class="a" style="left:1882px;top:972px;" width="8" height="11" viewBox="0 0 8 11"><path d="M1.5 0.5V10L6.5 5.25Z" fill="#666"/></svg>
<div class="a" style="left:1898px;top:262px;width:19px;height:19px;background:#fff;border:1px solid #c6c6c6;"></div>
<svg class="a" style="left:1902px;top:268px;" width="11" height="6" viewBox="0 0 11 6"><path d="M0.5 5.5H10L5.25 0.5Z" fill="#666"/></svg>
<div class="a" style="left:1898px;top:281px;width:19px;height:638px;background:#fff;border:1px solid #ababab;"></div>
<div class="a" style="left:1898px;top:919px;width:19px;height:26px;background:#dadada;"></div>
<div class="a" style="left:1898px;top:945px;width:19px;height:18px;background:#fff;border:1px solid #c6c6c6;"></div>
<svg class="a" style="left:1902px;top:952px;" width="11" height="6" viewBox="0 0 11 6"><path d="M0.5 0.5H10L5.25 5.5Z" fill="#666"/></svg>
<div class="a" style="left:7.5px;top:999.30px;font-size:13px;line-height:1;color:#444;letter-spacing:-0.354px;">Listo</div>
<div class="a" style="left:1578px;top:993px;width:41px;height:24px;background:#c6c6c6;"></div>
<svg class="a" style="left:1590px;top:998px;" width="15" height="14" viewBox="0 0 15 14"><rect x="0.5" y="0.5" width="13" height="12" fill="none" stroke="#666"/><path d="M0.5 4.5H13.5M0.5 8.5H13.5M4.5 0.5V12.5M9.5 0.5V12.5" stroke="#666"/></svg>
<svg class="a" style="left:1631px;top:998px;" width="16" height="14" viewBox="0 0 16 14"><rect x="0.5" y="0.5" width="14" height="12" fill="none" stroke="#666"/><rect x="3.5" y="2.5" width="8" height="8" fill="none" stroke="#666"/><path d="M5 4.5H10M5 6.5H10M5 8.5H10" stroke="#888"/></svg>
<svg class="a" style="left:1672px;top:998px;" width="16" height="14" viewBox="0 0 16 14"><path d="M0.5 0.5H14.5V12.5H0.5Z" fill="none" stroke="#666"/><path d="M5.5 0.5V7.5H10.5V0.5" fill="none" stroke="#666"/></svg>
<div class="a" style="left:1706px;top:1004px;width:10px;height:2px;background:#555;"></div>
<div class="a" style="left:1719px;top:1004px;width:125px;height:1px;background:#999;"></div>
<div class="a" style="left:1781px;top:998px;width:6px;height:13px;background:#555;"></div>
<div class="a" style="left:1848px;top:1004px;width:12px;height:2px;background:#555;"></div>
<div class="a" style="left:1853px;top:999px;width:2px;height:12px;background:#555;"></div>
<div class="a" style="left:1875.4px;top:999.30px;font-size:13px;line-height:1;color:#444;letter-spacing:-0.261px;">110 %</div>
</body></html>
